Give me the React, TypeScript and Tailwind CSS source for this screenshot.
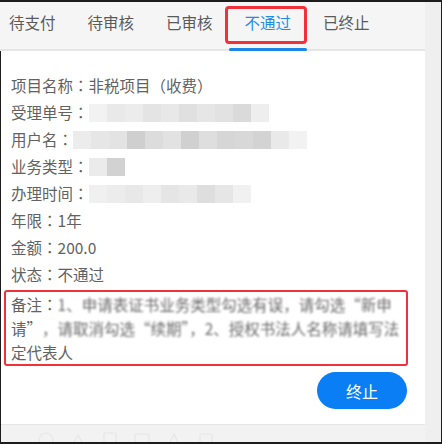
import React from 'react';

const tabs = ['待支付', '待审核', '已审核', '不通过', '已终止'];
const activeTab = '不通过';

// pixelated placeholders for the masked values
const Mosaic = ({ cells }: { cells: string[] }) => (
  <span className="inline-flex h-[18px] align-middle blur-[0.6px]">
    {cells.map((c, i) => (
      <span key={i} className={`w-[18px] h-[18px] ${c}`} />
    ))}
  </span>
);

// centered full-width colon
const Colon = () => (
  <span style={{ fontFamily: '"Noto Sans CJK TC", sans-serif' }}>：</span>
);

const Row = ({ label, children }: { label: string; children?: React.ReactNode }) => (
  <div className="flex items-center h-[27px] whitespace-nowrap">
    <span>{label}</span>
    <Colon />
    {children}
  </div>
);

const Blur = ({ children }: { children: React.ReactNode }) => (
  <span className="inline-block blur-[1.3px] text-[#6a6a6a]">{children}</span>
);

const App: React.FC = () => {
  return (
    <div
      className="w-[442px] h-[444px] bg-[#1c1c1c] pt-[2px] pb-[2px] pl-[1px] pr-[1px]"
      style={{ fontFamily: '"Noto Sans CJK SC", "Noto Sans", sans-serif' }}
    >
      <div className="flex h-full bg-[#efefef]">
        <div className="w-[424px] flex flex-col h-full">
          {/* tab bar */}
          <div className="h-[49px] bg-[#f5f5f5] border-b-2 border-[#e6e6e6] flex -ml-[8px] shrink-0">
            {tabs.map((t) => (
              <div key={t} className="relative w-[78.5px] shrink-0 flex items-center justify-center pb-[6px]">
                <span className={`text-[15.5px] ${t === activeTab ? 'text-[#1f8ceb]' : 'text-[#5a5a5a]'}`}>{t}</span>
                {t === activeTab && (
                  <>
                    <div className="absolute left-0 right-0 -bottom-[2px] h-[3px] bg-[#1a86e8] rounded-sm" />
                    <div className="absolute -left-[4px] top-[4px] w-[82px] h-[38px] border-[3px] border-[#f1303a] rounded-[4px]" />
                  </>
                )}
              </div>
            ))}
          </div>

          {/* details */}
          <div className="flex-1 bg-white pt-[21px] pl-[10px] pr-[18px] text-[15.5px] text-[#626262]">
            <Row label="项目名称">非税项目（收费）</Row>
            <Row label="受理单号">
              <Mosaic cells={['bg-[#f2f2f2]', 'bg-[#e9e9e9]', 'bg-[#ececec]', 'bg-[#e4e4e4]', 'bg-[#e8e8e8]', 'bg-[#e0e0e0]', 'bg-[#e6e6e6]', 'bg-[#e2e2e2]', 'bg-[#dadada]', 'bg-[#eeeeee]']} />
            </Row>
            <Row label="用户名">
              <Mosaic cells={['bg-[#ececec]', 'bg-[#e6e6e6]', 'bg-[#e3e3e3]', 'bg-[#cfcfcf]', 'bg-[#dcdcdc]', 'bg-[#e2e2e2]', 'bg-[#d0d0d0]', 'bg-[#dedede]', 'bg-[#d6d6d6]', 'bg-[#d8d8d8]', 'bg-[#d3d3d3]', 'bg-[#e9e9e9]', 'bg-[#f2f2f2]']} />
            </Row>
            <Row label="业务类型">
              <Mosaic cells={['bg-[#ebebeb]', 'bg-[#d2d2d2]']} />
            </Row>
            <Row label="办理时间">
              <Mosaic cells={['bg-[#f0f0f0]', 'bg-[#ececec]', 'bg-[#e8e8e8]', 'bg-[#eeeeee]', 'bg-[#e5e5e5]', 'bg-[#e9e9e9]', 'bg-[#dedede]', 'bg-[#e6e6e6]', 'bg-[#f1f1f1]']} />
            </Row>
            <Row label="年限">1年</Row>
            <Row label="金额">200.0</Row>
            <Row label="状态">不通过</Row>

            {/* remark, outlined in red */}
            <div className="-ml-[7px] mt-[2px] w-[404px] border-2 border-[#f1303a] rounded-[3px] pl-[5px] leading-[24px] whitespace-nowrap">
              <div>
                备注<Colon /><Blur>1、申请表证书业务类型勾选有误，请勾选“新申</Blur>
              </div>
              <div>
                请”<Blur>，请取消勾选“续期”，2、授权书法人名称请填写法</Blur>
              </div>
              <div>定代表人</div>
            </div>

            <div className="flex justify-end mt-[6px]">
              <button className="w-[90px] h-[37px] rounded-full bg-[#0a7ff5] text-white text-[16px]">终止</button>
            </div>
          </div>

          {/* bottom nav, mostly cut off */}
          <div className="h-[18px] bg-[#f2f2f2] border-t border-[#e6e6e6] overflow-hidden flex items-start gap-[14px] pl-[36px] pt-[6px] shrink-0">
            {[0, 1, 2, 3, 4, 5].map((i) => (
              <svg key={i} width="18" height="18" viewBox="0 0 18 18" fill="none" stroke="#e6e6e6" strokeWidth="1.2">
                {i === 0 && <circle cx="9" cy="9" r="7" />}
                {i === 1 && <path d="M2 16 L9 4 L16 16" />}
                {i === 2 && <rect x="3" y="2" width="12" height="15" rx="1" />}
                {i === 3 && <rect x="2" y="3" width="14" height="12" rx="1" />}
                {i === 4 && <path d="M3 16 L9 3 L15 16" />}
                {i === 5 && <rect x="3" y="3" width="12" height="12" rx="1" />}
              </svg>
            ))}
          </div>
        </div>
        <div className="flex-1" />
      </div>
    </div>
  );
};

export default App;
